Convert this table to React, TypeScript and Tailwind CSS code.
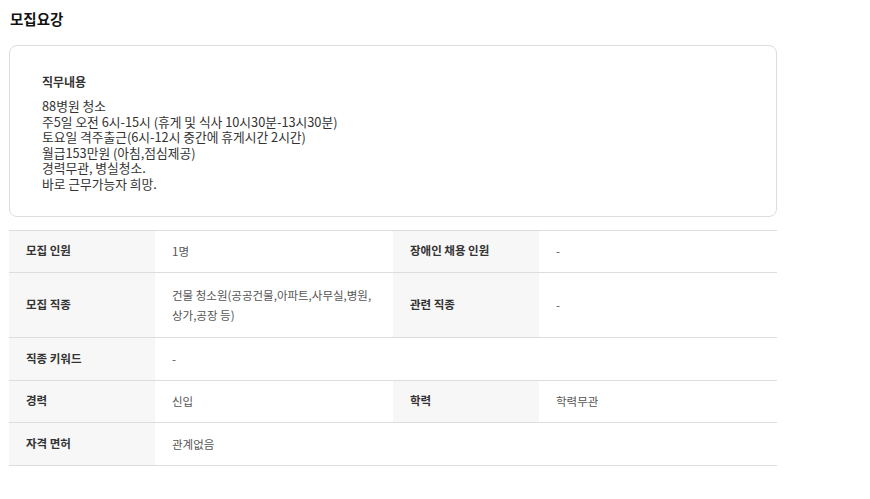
const 글꼴 = {
  fontFamily: '"Noto Sans CJK KR", "Noto Sans", sans-serif',
};

interface 행 {
  높이: string;
  항목: [string, string[]][];
}

const 행목록: 행[] = [
  {
    높이: "h-[42px]",
    항목: [
      ["모집 인원", ["1명"]],
      ["장애인 채용 인원", ["-"]],
    ],
  },
  {
    높이: "h-[65px]",
    항목: [
      ["모집 직종", ["건물 청소원(공공건물,아파트,사무실,병원,", "상가,공장 등)"]],
      ["관련 직종", ["-"]],
    ],
  },
  {
    높이: "h-[43px]",
    항목: [["직종 키워드", ["-"]]],
  },
  {
    높이: "h-[42px]",
    항목: [
      ["경력", ["신입"]],
      ["학력", ["학력무관"]],
    ],
  },
  {
    높이: "h-[43px]",
    항목: [["자격 면허", ["관계없음"]]],
  },
];

const 직무내용 = [
  "88병원 청소",
  "주5일 오전 6시-15시 (휴게 및 식사 10시30분-13시30분)",
  "토요일 격주출근(6시-12시 중간에 휴게시간 2시간)",
  "월급153만원 (아침,점심제공)",
  "경력무관, 병실청소.",
  "바로 근무가능자 희망.",
];

function App() {
  return (
    <div className="min-h-[499px] bg-white" style={글꼴}>
      <div className="w-[768px] pl-[9px] pt-[8px] box-content">
        <h2 className="pl-px text-[14.5px] font-bold leading-[22px] text-[#111]">
          모집요강
        </h2>

        <section className="mt-[15px] rounded-lg border border-[#dddddd] px-8 pt-[27px] pb-[24px]">
          <h3 className="text-[12px] font-bold leading-[18px] text-[#333]">
            직무내용
          </h3>
          <div className="mt-[7px] text-[12.75px] leading-[15.6px] text-[#333]">
            {직무내용.map((줄) => (
              <p key={줄}>{줄}</p>
            ))}
          </div>
        </section>

        <div className="mt-[13px] border-t border-[#dddddd] text-[11.5px]">
          {행목록.map((행, i) => (
            <div
              key={i}
              className={`grid grid-cols-[146px_238px_146px_238px] border-b border-[#dddddd] ${행.높이}`}
            >
              {행.항목.map(([라벨, 값]) => (
                <div key={라벨} className="contents">
                  <div className="flex items-center bg-[#f7f7f7] pl-[17px] font-bold text-[#333]">
                    {라벨}
                  </div>
                  <div
                    className={`flex flex-col justify-center pl-[17px] leading-[20px] text-[#555] ${
                      행.항목.length === 1 ? "col-span-3" : ""
                    }`}
                  >
                    {값.map((v) => (
                      <span key={v}>{v}</span>
                    ))}
                  </div>
                </div>
              ))}
            </div>
          ))}
        </div>
      </div>
    </div>
  );
}

export default App;
